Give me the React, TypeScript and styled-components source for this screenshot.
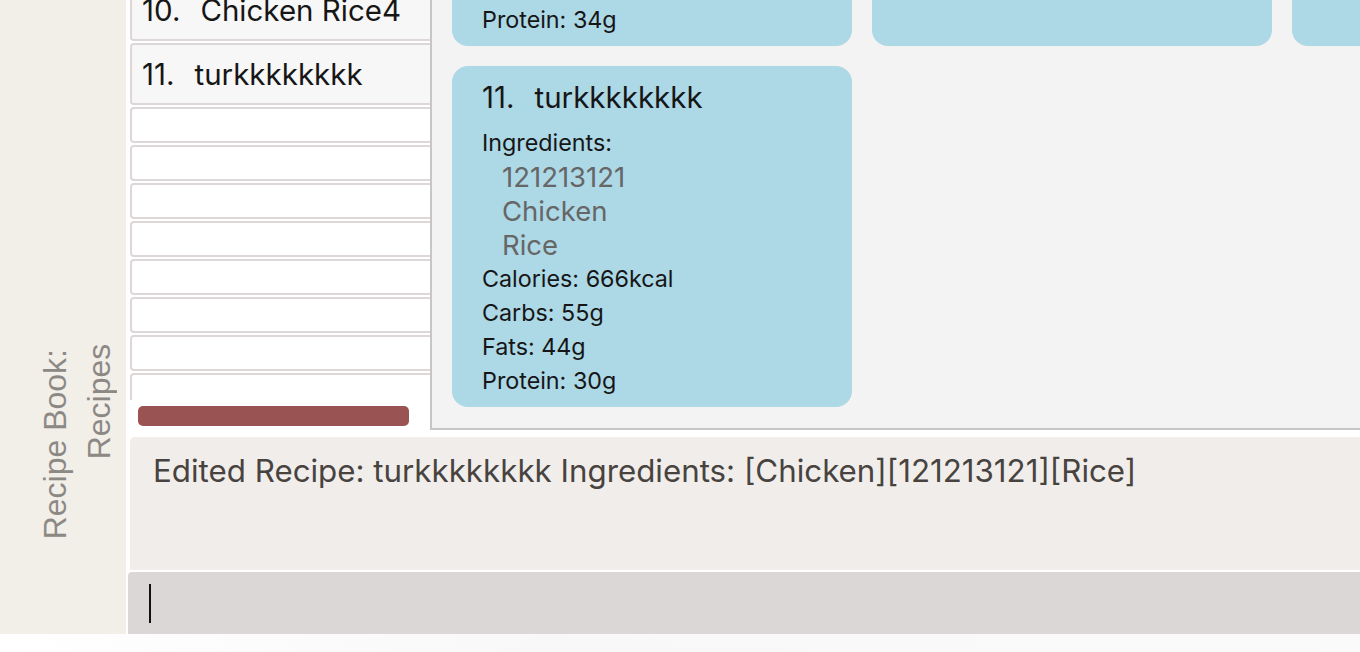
import React, { useLayoutEffect, useRef } from "react";
import styled, { createGlobalStyle } from "styled-components";

type Recipe = {
  id: number;
  name: string;
  ingredients: string[];
  calories: string;
  carbs: string;
  fats: string;
  protein: string;
};

const recipes: Recipe[] = [
  { id: 1, name: "Chicken Rice", ingredients: ["Chicken"], calories: "500kcal", carbs: "40g", fats: "20g", protein: "30g" },
  { id: 2, name: "Beef Noodles", ingredients: ["Beef"], calories: "600kcal", carbs: "60g", fats: "25g", protein: "35g" },
  { id: 3, name: "Fish Soup", ingredients: ["Fish"], calories: "300kcal", carbs: "20g", fats: "10g", protein: "28g" },
  { id: 4, name: "Egg Fried Rice", ingredients: ["Egg"], calories: "450kcal", carbs: "55g", fats: "18g", protein: "15g" },
  { id: 5, name: "Salad", ingredients: ["Lettuce"], calories: "150kcal", carbs: "10g", fats: "5g", protein: "4g" },
  { id: 6, name: "Chicken Rice2", ingredients: ["Chicken", "Rice", "Egg"], calories: "520kcal", carbs: "50g", fats: "22g", protein: "34g" },
  { id: 7, name: "Chicken Rice3", ingredients: ["Chicken"], calories: "510kcal", carbs: "48g", fats: "21g", protein: "32g" },
  { id: 8, name: "Pasta", ingredients: ["Pasta"], calories: "650kcal", carbs: "80g", fats: "20g", protein: "22g" },
  { id: 9, name: "Tofu", ingredients: ["Tofu"], calories: "200kcal", carbs: "8g", fats: "9g", protein: "18g" },
  { id: 10, name: "Chicken Rice4", ingredients: ["Chicken"], calories: "530kcal", carbs: "52g", fats: "23g", protein: "33g" },
  { id: 11, name: "turkkkkkkkk", ingredients: ["121213121", "Chicken", "Rice"], calories: "666kcal", carbs: "55g", fats: "44g", protein: "30g" },
];

const GlobalStyle = createGlobalStyle`
  html, body {
    margin: 0;
    padding: 0;
  }
  body {
    background: linear-gradient(90deg, #ffffff 0%, #f8f8f8 40%, #fafafa 100%);
    font-family: Inter, "Noto Sans", sans-serif;
    overflow: hidden;
  }
`;

const Frame = styled.div`
  display: flex;
  width: 1360px;
  height: 634px;
  background: #ffffff;
  overflow: hidden;
`;

const Sidebar = styled.aside`
  flex: 0 0 126px;
  box-sizing: border-box;
  background: #f2eee8;
  display: flex;
  flex-direction: column;
  justify-content: flex-end;
  align-items: flex-start;
  padding: 0 0 95px 33px;
`;

const SideLabel = styled.div`
  writing-mode: vertical-rl;
  transform: rotate(180deg);
  text-align: end;
  font-family: "Liberation Sans", Arial, sans-serif;
  font-size: 32px;
  line-height: 44px;
  color: #8c8985;
  white-space: nowrap;
`;

const SideLine = styled.div<{ $trail?: number }>`
  padding-inline-end: ${(p) => p.$trail ?? 0}px;
`;

const Main = styled.main`
  flex: 1;
  min-width: 0;
  display: flex;
  flex-direction: column;
  padding-left: 2px;
`;

const Top = styled.div`
  flex: 0 0 430px;
  display: flex;
  min-height: 0;
`;

const ListColumn = styled.section`
  flex: 0 0 300px;
  width: 300px;
  min-width: 0;
  margin-left: 2px;
  display: flex;
  flex-direction: column;
  background: #ffffff;
  overflow: hidden;
`;

const ListViewport = styled.div`
  height: 400px;
  width: 300px;
  overflow: hidden;
`;

const ListInner = styled.div`
  width: 340px;
  display: flex;
  flex-direction: column;
  gap: 2px;
`;

const Cell = styled.div<{ $filled: boolean }>`
  box-sizing: border-box;
  flex: 0 0 auto;
  height: ${(p) => (p.$filled ? 62 : 36)}px;
  border: 2px solid #ddd7d7;
  border-radius: 4px;
  background: ${(p) => (p.$filled ? "#f7f7f7" : "#ffffff")};
  display: flex;
  align-items: center;
  padding-left: 10px;
  font-size: 29.5px;
  line-height: 36px;
  color: #161616;
  white-space: nowrap;
`;

const IdText = styled.span`
  margin-right: 20px;
`;

const ScrollTrack = styled.div`
  flex: 0 0 30px;
  box-sizing: border-box;
  padding: 6px 0 0 8px;
  background: #ffffff;
`;

const ScrollThumb = styled.div`
  width: 271px;
  height: 20px;
  border-radius: 5px;
  background: #9a5353;
`;

const CardsPanel = styled.section`
  flex: 1;
  min-width: 0;
  box-sizing: border-box;
  background: #f3f3f3;
  border-left: 2px solid #c6c6c6;
  border-bottom: 2px solid #c6c6c6;
  overflow: hidden;
`;

const CardGrid = styled.div`
  display: grid;
  grid-template-columns: repeat(5, 400px);
  gap: 20px;
  padding: 20px 20px 60px;
  width: max-content;
`;

const Card = styled.article`
  box-sizing: border-box;
  height: 341px;
  border-radius: 16px;
  background: #add8e6;
  padding: 13px 30px 9px;
  color: #161616;
  white-space: nowrap;
`;

const CardTitle = styled.div`
  font-size: 29.5px;
  line-height: 36px;
  margin-bottom: 11px;
`;

const Line = styled.div`
  font-size: 23.3px;
  line-height: 34px;
`;

const Ingredient = styled.div`
  font-size: 27.5px;
  line-height: 34px;
  padding-left: 20px;
  color: #666666;
`;

const ResultBox = styled.div`
  flex: 0 0 133px;
  box-sizing: border-box;
  margin: 7px 0 0 2px;
  background: #f0edea;
  border-top-left-radius: 5px;
  padding: 14px 0 0 23px;
  font-size: 31.3px;
  line-height: 40px;
  color: #48433f;
  white-space: nowrap;
`;

const CommandBox = styled.div`
  flex: 1;
  box-sizing: border-box;
  margin-top: 2px;
  background: #dcd7d7;
  border-top-left-radius: 4px;
  padding: 12px 0 0 21px;
`;

const Caret = styled.span`
  display: block;
  width: 2px;
  height: 39px;
  background: #111111;
`;

function RecipeCard({ r }: { r: Recipe }) {
  return (
    <Card>
      <CardTitle>
        <IdText>{r.id}.</IdText>
        {r.name}
      </CardTitle>
      <Line>Ingredients:</Line>
      {r.ingredients.map((i) => (
        <Ingredient key={i}>{i}</Ingredient>
      ))}
      <Line>Calories: {r.calories}</Line>
      <Line>Carbs: {r.carbs}</Line>
      <Line>Fats: {r.fats}</Line>
      <Line>Protein: {r.protein}</Line>
    </Card>
  );
}

export default function App() {
  const listRef = useRef<HTMLDivElement>(null);
  const cardsRef = useRef<HTMLDivElement>(null);

  useLayoutEffect(() => {
    if (listRef.current) listRef.current.scrollTop = 597;
    if (cardsRef.current) cardsRef.current.scrollTop = 676;
  }, []);

  const empties = Array.from({ length: 10 }, (_, i) => i);

  return (
    <>
      <GlobalStyle />
      <Frame>
        <Sidebar>
          <SideLabel>
            <SideLine $trail={5}>Recipe Book:</SideLine>
            <SideLine>Recipes</SideLine>
          </SideLabel>
        </Sidebar>
        <Main>
          <Top>
            <ListColumn>
              <ListViewport ref={listRef}>
                <ListInner>
                  {recipes.map((r) => (
                    <Cell key={r.id} $filled>
                      <IdText>{r.id}.</IdText>
                      {r.name}
                    </Cell>
                  ))}
                  {empties.map((e) => (
                    <Cell key={`e${e}`} $filled={false} />
                  ))}
                </ListInner>
              </ListViewport>
              <ScrollTrack>
                <ScrollThumb />
              </ScrollTrack>
            </ListColumn>
            <CardsPanel ref={cardsRef}>
              <CardGrid>
                {recipes.map((r) => (
                  <RecipeCard key={r.id} r={r} />
                ))}
              </CardGrid>
            </CardsPanel>
          </Top>
          <ResultBox>
            Edited Recipe: turkkkkkkkk Ingredients: [Chicken][121213121][Rice]
          </ResultBox>
          <CommandBox>
            <Caret />
          </CommandBox>
        </Main>
      </Frame>
    </>
  );
}
